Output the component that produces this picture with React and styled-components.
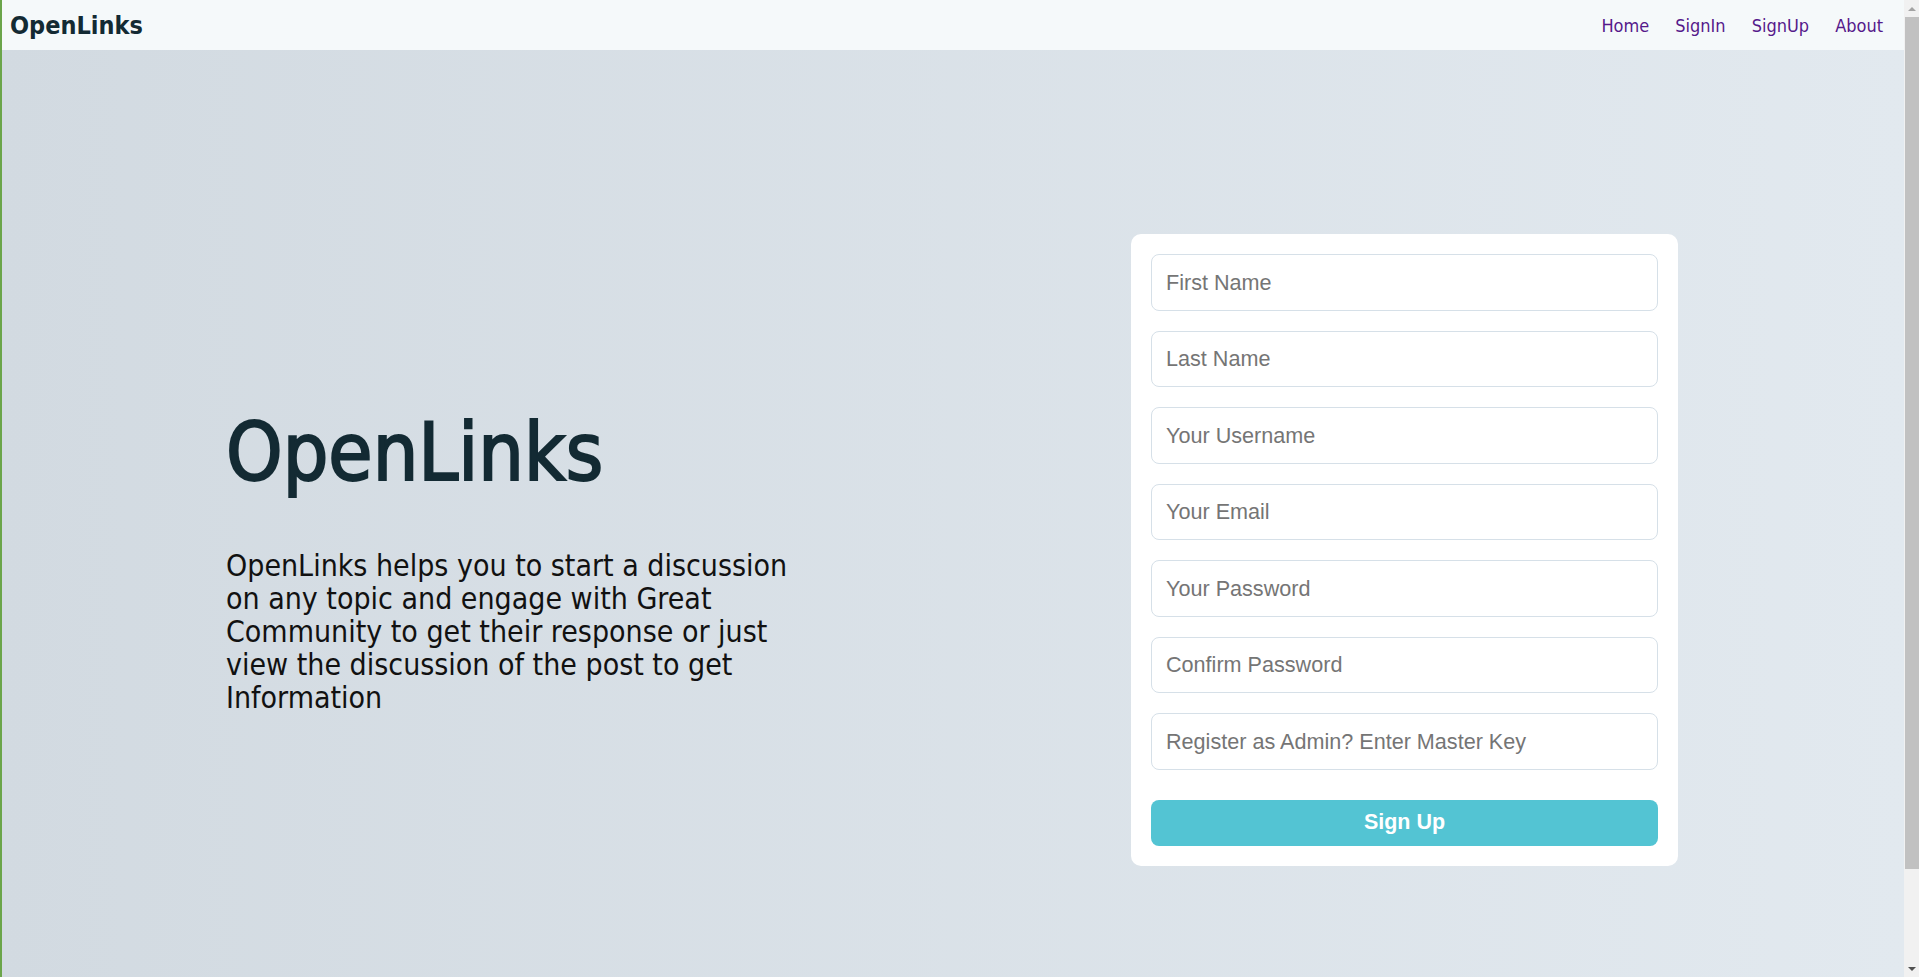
import React from "react";
import styled, { createGlobalStyle } from "styled-components";

const GlobalStyle = createGlobalStyle`
  * {
    box-sizing: border-box;
  }
  body {
    margin: 0;
    font-family: "DejaVu Sans Condensed", "DejaVu Sans", sans-serif;
    font-stretch: condensed;
  }
`;

const Page = styled.div`
  border-left: 2px solid #6ba54a;
  margin-right: 15px;
  min-height: 100vh;
`;

// classic window scrollbar drawn over the right edge, as in the screenshot
const ScrollRail = styled.div`
  position: fixed;
  top: 0;
  right: 0;
  width: 15px;
  height: 100vh;
  display: flex;
  flex-direction: column;
  background: #f1f1f1;
  z-index: 5;
`;

const ScrollArrow = styled.div`
  height: 17px;
  flex: none;
  display: flex;
  align-items: center;
  justify-content: center;

  &::before {
    content: "";
    width: 0;
    height: 0;
    border-left: 4px solid transparent;
    border-right: 4px solid transparent;
    ${({ $down }) => ($down ? "border-top: 4px solid #505050;" : "border-bottom: 4px solid #a3a3a3;")}
  }
`;

const ScrollThumb = styled.div`
  height: calc(100vh - 125px);
  margin-left: 1px;
  flex: none;
  background: #c1c1c1;
`;

const ScrollSpacer = styled.div`
  flex: 1;
`;

const NavBar = styled.nav`
  height: 50px;
  display: flex;
  align-items: center;
  justify-content: space-between;
  padding: 0 21px 0 8px;
  background: #f5f9fa;
`;

const Brand = styled.a`
  font-size: 25px;
  font-weight: 700;
  color: #132a33;
  text-decoration: none;
`;

const NavLinks = styled.ul`
  display: flex;
  gap: 26px;
  list-style: none;
  margin: 0;
  padding: 0;
`;

const NavLink = styled.a`
  font-size: 18px;
  color: #551a8b;
  text-decoration: none;
`;

const Hero = styled.main`
  height: calc(100vh + 55px);
  padding: 0 226px 32px 224px;
  display: flex;
  align-items: center;
  justify-content: space-between;
  background: linear-gradient(to right, #d2dae1, #e2e9ef);
`;

const Intro = styled.section`
  width: 575px;
  margin-top: 20px;
  display: flex;
  flex-direction: column;
  gap: 50px;
`;

const Title = styled.h1`
  margin: 0;
  font-size: 80px;
  font-weight: 400;
  color: #132a33;
  -webkit-text-stroke: 2px #132a33;
`;

const Blurb = styled.p`
  margin: 0;
  font-size: 30px;
  line-height: 33px;
  color: #111;
`;

const Card = styled.form`
  width: 547px;
  padding: 20px;
  display: flex;
  flex-direction: column;
  gap: 20px;
  background: #fff;
  border-radius: 10px;
`;

const Field = styled.input`
  height: 56.5px;
  padding: 0 14px;
  border: 1px solid #d6e0e8;
  border-radius: 8px;
  font-family: "Liberation Sans", Arial, sans-serif;
  font-size: 21.6px;
  color: #222;
  background: #fff;
  outline: none;

  &::placeholder {
    color: #757575;
  }
`;

const SubmitButton = styled.button`
  margin-top: 10px;
  height: 46px;
  border: none;
  border-radius: 8px;
  background: #53c4d3;
  color: #fff;
  font-family: "Liberation Sans", Arial, sans-serif;
  font-size: 21.5px;
  font-weight: 700;
  cursor: pointer;
`;

const links = ["Home", "SignIn", "SignUp", "About"];

const fields = [
  { name: "firstName", type: "text", placeholder: "First Name" },
  { name: "lastName", type: "text", placeholder: "Last Name" },
  { name: "username", type: "text", placeholder: "Your Username" },
  { name: "email", type: "email", placeholder: "Your Email" },
  { name: "password", type: "password", placeholder: "Your Password" },
  { name: "confirmPassword", type: "password", placeholder: "Confirm Password" },
  { name: "masterKey", type: "text", placeholder: "Register as Admin? Enter Master Key" },
];

export default function App() {
  const onSubmit = event => {
    event.preventDefault();
  };

  return (
    <>
      <GlobalStyle />
      <Page>
        <NavBar>
          <Brand href="#">OpenLinks</Brand>
          <NavLinks>
            {links.map(link => (
              <li key={link}>
                <NavLink href="#">{link}</NavLink>
              </li>
            ))}
          </NavLinks>
        </NavBar>
        <Hero>
          <Intro>
            <Title>OpenLinks</Title>
            <Blurb>
              OpenLinks helps you to start a discussion on any topic and engage with Great Community to get their
              response or just view the discussion of the post to get Information
            </Blurb>
          </Intro>
          <Card onSubmit={onSubmit}>
            {fields.map(field => (
              <Field key={field.name} {...field} />
            ))}
            <SubmitButton type="submit">Sign Up</SubmitButton>
          </Card>
        </Hero>
      </Page>
      <ScrollRail aria-hidden="true">
        <ScrollArrow />
        <ScrollThumb />
        <ScrollSpacer />
        <ScrollArrow $down />
      </ScrollRail>
    </>
  );
}
